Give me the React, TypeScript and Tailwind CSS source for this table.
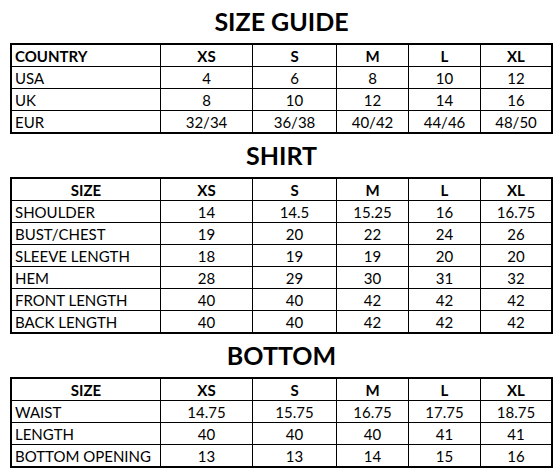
import { Fragment } from 'react';

const sizes = ['XS', 'S', 'M', 'L', 'XL'];

type Row = { label: string; values: string[] };

const countryRows: Row[] = [
  { label: 'USA', values: ['4', '6', '8', '10', '12'] },
  { label: 'UK', values: ['8', '10', '12', '14', '16'] },
  { label: 'EUR', values: ['32/34', '36/38', '40/42', '44/46', '48/50'] },
];

const shirtRows: Row[] = [
  { label: 'SHOULDER', values: ['14', '14.5', '15.25', '16', '16.75'] },
  { label: 'BUST/CHEST', values: ['19', '20', '22', '24', '26'] },
  { label: 'SLEEVE LENGTH', values: ['18', '19', '19', '20', '20'] },
  { label: 'HEM', values: ['28', '29', '30', '31', '32'] },
  { label: 'FRONT LENGTH', values: ['40', '40', '42', '42', '42'] },
  { label: 'BACK LENGTH', values: ['40', '40', '42', '42', '42'] },
];

const bottomRows: Row[] = [
  { label: 'WAIST', values: ['14.75', '15.75', '16.75', '17.75', '18.75'] },
  { label: 'LENGTH', values: ['40', '40', '40', '41', '41'] },
  { label: 'BOTTOM OPENING', values: ['13', '13', '14', '15', '16'] },
];

function Section({ title, firstHeader, headerLeft, rows }: { title: string; firstHeader: string; headerLeft?: boolean; rows: Row[] }) {
  return (
    <section>
      <h2 className="h-[43px] text-center text-[25px] font-bold leading-[43px]">{title}</h2>
      <div className="grid grid-cols-[148px_91px_83px_71px_71px_70px] gap-px border-2 border-black bg-black">
        <div className={`h-[21px] bg-white font-bold ${headerLeft ? 'pl-[3px] text-left' : 'text-center'}`}>{firstHeader}</div>
        {sizes.map((s) => (
          <div key={s} className="h-[21px] bg-white text-center font-bold">
            {s}
          </div>
        ))}
        {rows.map((row) => (
          <Fragment key={row.label}>
            <div className="h-[21px] bg-white pl-[3px]">{row.label}</div>
            {row.values.map((v, i) => (
              <div key={i} className="h-[21px] bg-white text-center">
                {v}
              </div>
            ))}
          </Fragment>
        ))}
      </div>
    </section>
  );
}

export default function App() {
  return (
    <div className="h-[473px] w-[553px] bg-white pl-[10px] text-[15px] leading-[22px] text-black" style={{ fontFamily: 'Lato, "Open Sans", sans-serif' }}>
      <Section title="SIZE GUIDE" firstHeader="COUNTRY" headerLeft rows={countryRows} />
      <Section title="SHIRT" firstHeader="SIZE" rows={shirtRows} />
      <Section title="BOTTOM" firstHeader="SIZE" rows={bottomRows} />
    </div>
  );
}
